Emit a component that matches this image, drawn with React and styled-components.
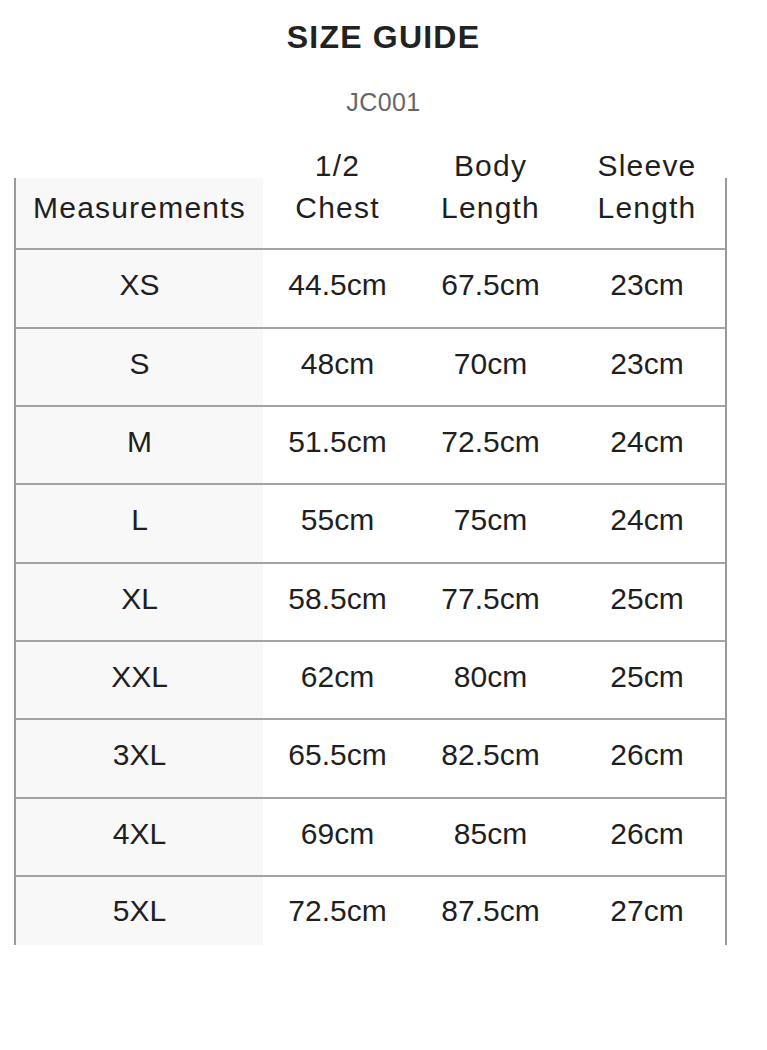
import React from 'react'
import styled, { createGlobalStyle } from 'styled-components'

const GlobalStyle = createGlobalStyle`
    body {
        margin: 0;
        background: #ffffff;
        font-family: "Liberation Sans", Arial, sans-serif;
        color: #333333;
    }
`

const Page = styled.div`
    width: 767px;
    min-height: 1050px;
    padding-top: 17px;
    box-sizing: border-box;
`

const Title = styled.h1`
    margin: 0;
    text-align: center;
    font-size: 32px;
    line-height: 40px;
    font-weight: 700;
    letter-spacing: 1.2px;
    color: #222222;
`

const Code = styled.div`
    margin-top: 30px;
    text-align: center;
    font-size: 25px;
    line-height: 30px;
    color: #666666;
    letter-spacing: 0.4px;
`

const Table = styled.div`
    margin: 61px 0 0 14px;
    width: 713px;
    border-left: 2px solid #9a9a9a;
    border-right: 2px solid #9a9a9a;
    box-sizing: border-box;
`

const Row = styled.div`
    display: grid;
    grid-template-columns: 247px 149px 157px 156px;
    grid-template-rows: minmax(0, 1fr);
    height: ${props => props.$height}px;
    border-top: ${props => props.$first ? 'none' : '2px solid #a3a3a3'};
    box-sizing: border-box;
`

const HeadCell = styled.div`
    display: flex;
    align-items: flex-end;
    justify-content: center;
    min-height: 0;
    text-align: center;
    padding-bottom: 19px;
    box-sizing: border-box;
    font-size: 30px;
    line-height: 42px;
    letter-spacing: 1.2px;
    color: #1f1f1f;
    background: ${props => props.$shade ? '#f8f8f8' : 'transparent'};
`

const Cell = styled.div`
    display: flex;
    align-items: center;
    justify-content: center;
    padding-bottom: ${props => props.$last ? 0 : 7}px;
    box-sizing: border-box;
    font-size: 30px;
    color: #1f1f1f;
    background: ${props => props.$shade ? '#f8f8f8' : 'transparent'};
`

const sizes = [
    ['XS', '44.5cm', '67.5cm', '23cm'],
    ['S', '48cm', '70cm', '23cm'],
    ['M', '51.5cm', '72.5cm', '24cm'],
    ['L', '55cm', '75cm', '24cm'],
    ['XL', '58.5cm', '77.5cm', '25cm'],
    ['XXL', '62cm', '80cm', '25cm'],
    ['3XL', '65.5cm', '82.5cm', '26cm'],
    ['4XL', '69cm', '85cm', '26cm'],
    ['5XL', '72.5cm', '87.5cm', '27cm'],
]

const heights = [79, 78, 78, 79, 78, 78, 79, 78, 70]

function App() {
    return (
        <Page>
            <GlobalStyle />
            <Title>SIZE GUIDE</Title>
            <Code>JC001</Code>
            <Table>
                <Row $first $height={70}>
                    <HeadCell $shade>Measurements</HeadCell>
                    <HeadCell>1/2<br />Chest</HeadCell>
                    <HeadCell>Body<br />Length</HeadCell>
                    <HeadCell>Sleeve<br />Length</HeadCell>
                </Row>
                {sizes.map((row, i) => {
                    const last = i === sizes.length - 1
                    return (
                        <Row key={row[0]} $height={heights[i]}>
                            <Cell $shade $last={last}>{row[0]}</Cell>
                            <Cell $last={last}>{row[1]}</Cell>
                            <Cell $last={last}>{row[2]}</Cell>
                            <Cell $last={last}>{row[3]}</Cell>
                        </Row>
                    )
                })}
            </Table>
        </Page>
    )
}

export default App
